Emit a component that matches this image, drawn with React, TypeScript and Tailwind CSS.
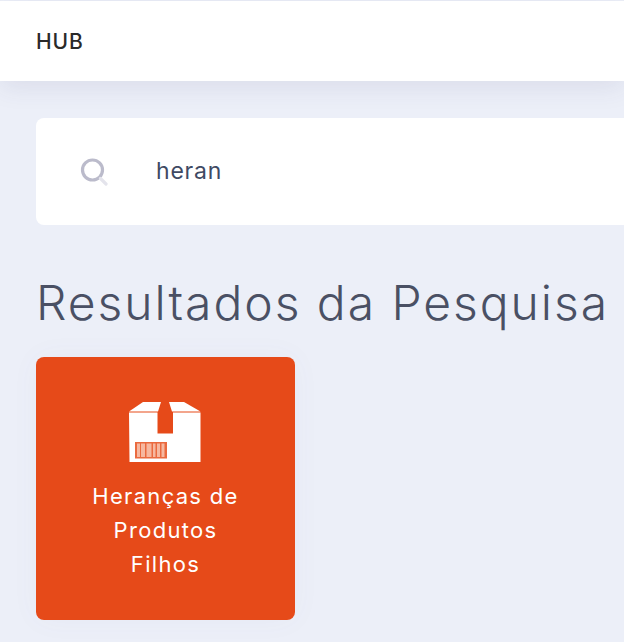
import React from 'react';

const BoxIcon = () => (
  <svg width="72" height="60" viewBox="0 0 72 60" fill="#fff" className="-ml-px">
    <path d="M0 9.6 L14 0 H32 L29 9.6 Z" />
    <path d="M40 0 H55 L71.5 9.6 H43 Z" />
    <path d="M0 10.6 H28.5 V31.5 H44 V10.6 H71.5 V60 H0.5 Z" />
    <rect x="6" y="40" width="32" height="16.5" fill="#ea6a3f" />
    <g fill="#f6b8a0">
      <rect x="8" y="41.5" width="3" height="13.5" />
      <rect x="12" y="41.5" width="4" height="13.5" />
      <rect x="17.5" y="41.5" width="5" height="13.5" />
      <rect x="24" y="41.5" width="2.5" height="13.5" />
      <rect x="28" y="41.5" width="3" height="13.5" />
      <rect x="32.5" y="41.5" width="3" height="13.5" />
    </g>
  </svg>
);

const SearchIcon = () => (
  <svg width="28" height="28" viewBox="0 0 28 28" fill="none" className="-ml-px">
    <circle cx="12.5" cy="12" r="10" stroke="#bbbbcb" strokeWidth="3.2" />
    <path d="M20.5 20.5 L26 26" stroke="#e4e4ec" strokeWidth="3.2" strokeLinecap="round" />
  </svg>
);

export default function App() {
  return (
    <div className="h-[642px] w-[624px] overflow-hidden bg-[#eceff8] font-['Inter','Liberation_Sans',sans-serif]">
      <header className="mt-px flex h-20 items-center bg-white px-9 shadow-[0_6px_26px_rgba(60,60,110,0.1)]">
        <span className="text-[21px] font-medium leading-none tracking-[0.9px] text-[#2a2a2a]">HUB</span>
      </header>

      <main className="px-9 pt-[37px]">
        <div className="flex h-[107px] w-[800px] items-center rounded-lg bg-white pl-[45px]">
          <SearchIcon />
          <span className="ml-[48px] text-[23px] tracking-[0.8px] text-[#3f4a63]">heran</span>
        </div>

        <h1 className="mt-[45px] whitespace-nowrap text-[48px] font-light leading-[66px] tracking-[1.95px] text-[#4a5064]">
          Resultados da Pesquisa
        </h1>

        <div className="mt-[21px] flex h-[263px] w-[259px] flex-col items-center rounded-lg bg-[#e64a19] pt-[45px] shadow-[0_0_30px_rgba(90,90,160,0.04)]">
          <BoxIcon />
          <p className="mt-[17px] w-[200px] text-center text-[22px] leading-[34px] tracking-[1.3px] text-white">
            Heranças de
            <br />
            Produtos
            <br />
            Filhos
          </p>
        </div>
      </main>
    </div>
  );
}
